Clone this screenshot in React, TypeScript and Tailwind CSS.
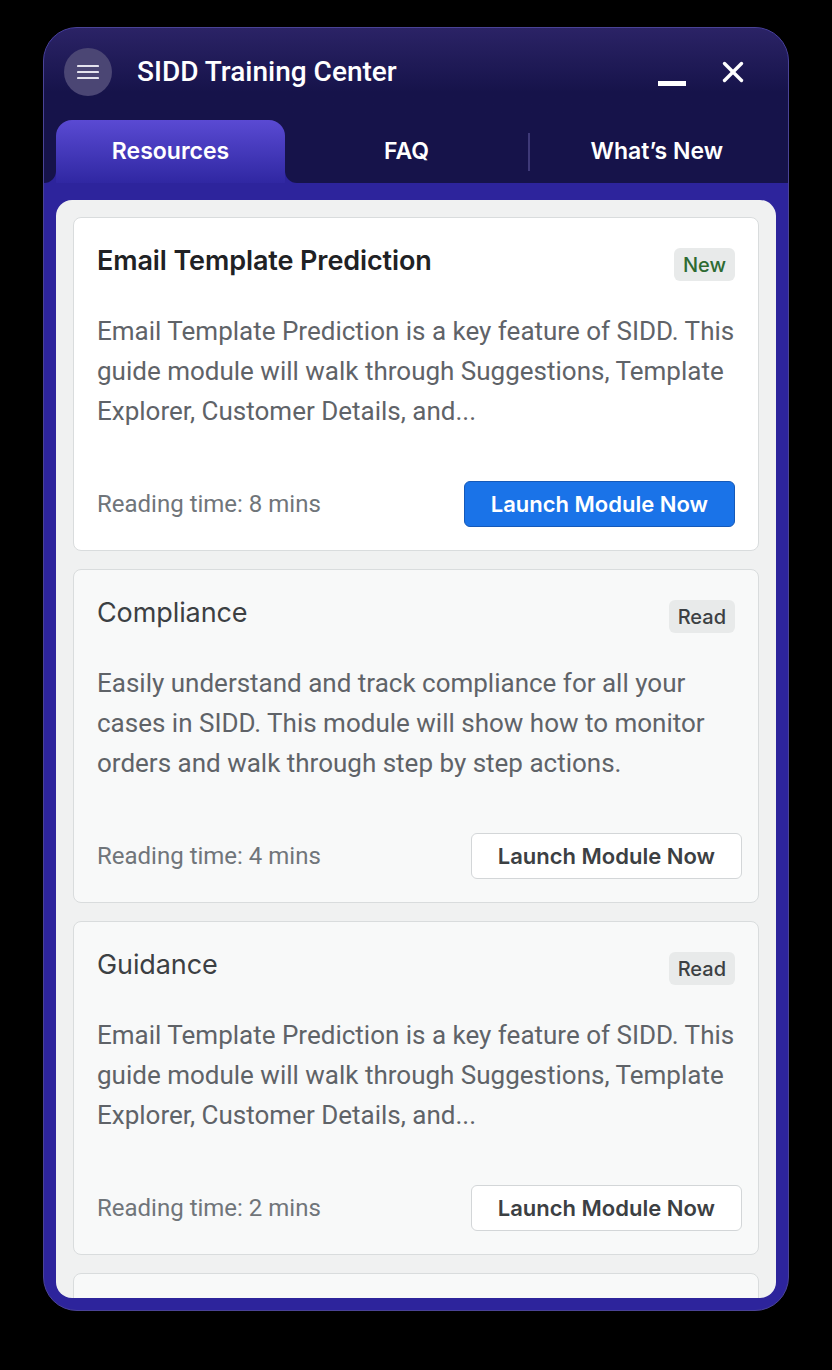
import { X } from 'lucide-react';

type Module = {
  title: string;
  description: string;
  minutes: number;
  status: 'New' | 'Read';
};

const modules: Module[] = [
  {
    title: 'Email Template Prediction',
    description:
      'Email Template Prediction is a key feature of SIDD. This guide module will walk through Suggestions, Template Explorer, Customer Details, and...',
    minutes: 8,
    status: 'New',
  },
  {
    title: 'Compliance',
    description:
      'Easily understand and track compliance for all your cases in SIDD. This module will show how to monitor orders and walk through step by step actions.',
    minutes: 4,
    status: 'Read',
  },
  {
    title: 'Guidance',
    description:
      'Email Template Prediction is a key feature of SIDD. This guide module will walk through Suggestions, Template Explorer, Customer Details, and...',
    minutes: 2,
    status: 'Read',
  },
];

const headingFont = "font-['Inter','Noto_Sans',sans-serif]";
const bodyFont = "font-['Roboto','Liberation_Sans',sans-serif]";

function ModuleCard({ module }: { module: Module }) {
  const isNew = module.status === 'New';

  return (
    <div
      className={`h-[334px] shrink-0 rounded-[8px] border-[1.5px] border-[#d9dcdd] px-[23px] pt-[28px] pb-[23px] ${
        isNew ? 'bg-white' : 'bg-[#f8f9f9]'
      }`}
    >
      <div className="flex items-start justify-between">
        <h3
          className={`${headingFont} text-[27px] leading-[30px] tracking-[-0.1px] ${
            isNew ? 'font-semibold text-[#202124]' : 'font-normal text-[#3c4043]'
          }`}
        >
          {module.title}
        </h3>
        <span
          className={`${headingFont} mt-[2px] flex h-[33px] items-center rounded-[6px] bg-[#e8eaea] px-[9px] text-[20px] font-medium ${
            isNew ? 'text-[#2e6b32]' : 'text-[#3c4043]'
          }`}
        >
          {module.status}
        </span>
      </div>

      <p
        className={`${bodyFont} mt-[30px] h-[120px] text-[26px] leading-[40px] text-[#5f6368]`}
      >
        {module.description}
      </p>

      <div className="mt-[50px] flex items-center justify-between">
        <span className={`${bodyFont} text-[24px] text-[#70757a]`}>
          Reading time: {module.minutes} mins
        </span>
        {isNew ? (
          <button
            className={`${headingFont} h-[46px] rounded-[6px] border-[1.5px] border-[#1559b8] bg-[#1a73e8] px-[26px] text-[22px] font-semibold text-white`}
          >
            Launch Module Now
          </button>
        ) : (
          <button
            className={`${headingFont} -mr-[7px] h-[46px] rounded-[6px] border-[1.5px] border-[#d3d6d8] bg-white px-[26px] text-[22px] font-semibold text-[#3c4043]`}
          >
            Launch Module Now
          </button>
        )}
      </div>
    </div>
  );
}

export default function App() {
  return (
    <div className="min-h-[1370px] bg-black pl-[43px] pt-[27px]">
      <div className="flex h-[1284px] w-[746px] flex-col overflow-hidden rounded-[34px] border-[1.5px] border-[#4a4396] bg-[#2d249c]">
        {/* Header */}
        <div className="shrink-0 bg-gradient-to-b from-[#2b2366] to-[#16134a] to-70% pt-[20px] pb-[24px]">
          <div className="flex h-[48px] items-center pl-[20px] pr-[38px]">
            <button className="flex h-[48px] w-[48px] items-center justify-center rounded-full bg-[#4b4674]">
              <svg width="22" height="16" viewBox="0 0 22 16" fill="none">
                <path
                  d="M1 2h20M1 8h20M1 14h20"
                  stroke="#e4e3ee"
                  strokeWidth="2.2"
                  strokeLinecap="round"
                />
              </svg>
            </button>
            <h1
              className={`${bodyFont} ml-[25px] flex-1 text-[28px] font-medium text-white`}
            >
              SIDD Training Center
            </h1>
            <div className="mt-[22px] mr-[30px] h-[5px] w-[28px] bg-white" />
            <X className="h-[34px] w-[34px] text-white" strokeWidth={2.4} />
          </div>
        </div>

        {/* Tabs */}
        <div className="flex h-[63px] shrink-0 bg-[#2d249c]">
          <div className="w-[12px] rounded-br-[12px] bg-[#16134a]" />
          <div className="w-[229px] bg-[#16134a]">
            <div
              className={`${headingFont} flex h-full items-center justify-center rounded-t-[16px] bg-gradient-to-b from-[#5a4ad3] to-[#3027a2] text-[23px] font-semibold text-white`}
            >
              Resources
            </div>
          </div>
          <div className="flex flex-1 items-center rounded-bl-[12px] bg-[#16134a]">
            <div
              className={`${headingFont} flex w-[243px] justify-center text-[23px] font-semibold text-white`}
            >
              FAQ
            </div>
            <div className="h-[38px] w-[1.5px] bg-[#3e3978]" />
            <div
              className={`${headingFont} flex flex-1 justify-center pr-[4px] text-[23px] font-semibold text-white`}
            >
              What’s New
            </div>
          </div>
        </div>

        {/* Content */}
        <div className="min-h-0 flex-1 px-[12px] pb-[12px] pt-[17px]">
          <div className="flex h-full flex-col gap-[18px] overflow-hidden rounded-[16px] bg-[#f0f1f1] px-[17px] pt-[17px]">
            {modules.map((m) => (
              <ModuleCard key={m.title} module={m} />
            ))}
            {/* next card, scrolled out of view */}
            <div className="h-[334px] shrink-0 rounded-[8px] border-[1.5px] border-[#d9dcdd] bg-[#f8f9f9]" />
          </div>
        </div>
      </div>
    </div>
  );
}
